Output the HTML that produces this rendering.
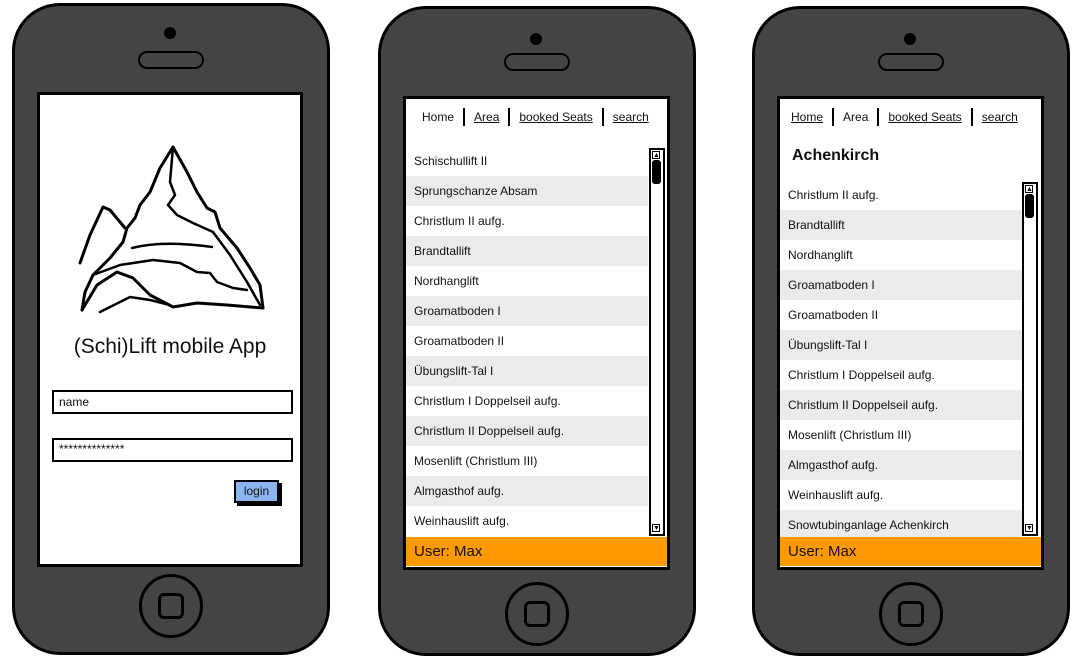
<!DOCTYPE html>
<html><head><meta charset="utf-8"><style>
*{margin:0;padding:0;box-sizing:border-box}
body{width:1079px;height:661px;background:#fff;position:relative;overflow:hidden;font-family:"Liberation Sans",sans-serif;color:#111}
.a{position:absolute}
.phone{position:absolute;background:#444;border:3px solid #000;border-radius:48px}
.scr{position:absolute;background:#fff;border:3px solid #000}
.cam{position:absolute;width:12px;height:12px;border-radius:50%;background:#000}
.spk{position:absolute;width:66px;height:18px;border:2.5px solid #000;border-radius:9px}
.home{position:absolute;width:64px;height:64px;border:3px solid #000;border-radius:50%}
.home i{position:absolute;left:16px;top:16px;width:26px;height:26px;border:3px solid #000;border-radius:6px}
.row{position:absolute;height:30px;line-height:30px;font-size:12px;padding-left:8px}
.g{background:#ebebeb}
.nav{position:absolute;font-size:12px;white-space:nowrap}
.nav span{display:inline-block;padding:0 9px;border-right:2px solid #000;line-height:18px}
.nav span:first-child{padding-left:0}
.nav span:last-child{border-right:none}
.u{text-decoration:underline}
.bar{position:absolute;background:#ff9900;font-size:15px;line-height:29px;padding-left:8px}
.sb{position:absolute;width:16px;border:2px solid #000;background:#fff}
.btn{position:absolute;width:8px;height:8px;border:1px solid #000;font-size:7px;line-height:7px;text-align:center}
</style></head><body>

<!-- Phone 1 -->
<div class="phone" style="left:12px;top:3px;width:318px;height:652px"></div>
<div class="cam" style="left:164px;top:27px"></div>
<div class="spk" style="left:138px;top:51px"></div>
<div class="scr" style="left:37px;top:92px;width:266px;height:475px"></div>
<div class="home" style="left:139px;top:574px"><i></i></div>
<svg class="a" style="left:0;top:0" width="330" height="330" fill="none" stroke="#000" stroke-width="3" stroke-linejoin="round" stroke-linecap="round">
<path d="M173,147 L160,168 150,192 140,205 135,218 127,228 123,242 110,258 93,275 85,292 82,310"/>
<path d="M80,263 L90,235 103,207 110,210 125,228"/>
<path d="M173,147 L187,172 197,192 207,208 215,212 220,228 237,248 250,268 260,285 263,308"/>
<path d="M173,147 L170,182 175,195 168,205 177,215 193,223 213,232 230,255 247,282 260,305" stroke-width="2.5"/>
<path d="M132,248 Q163,240 212,247" stroke-width="2.5"/>
<path d="M93,275 L120,265 153,260 180,263 197,272 210,273 217,282 233,288 247,290" stroke-width="2.5"/>
<path d="M82,310 L97,285 117,272 133,278 150,295 173,307 197,303 227,305 263,308"/>
<path d="M100,312 L130,297 150,300 170,305" stroke-width="2.5"/>
</svg>
<div class="a" style="left:40px;top:335px;width:260px;text-align:center;font-size:21px">(Schi)Lift mobile App</div>
<div class="a" style="left:52px;top:390px;width:241px;height:24px;border:2px solid #000;font-size:12px;line-height:20px;padding-left:5px">name</div>
<div class="a" style="left:52px;top:438px;width:241px;height:24px;border:2px solid #000;font-size:12px;line-height:18px;padding-left:5px">**************</div>
<div class="a" style="left:237px;top:483px;width:45px;height:23px;background:#000"></div>
<div class="a" style="left:234px;top:480px;width:45px;height:23px;background:#8cb4f0;border:2px solid #000;font-size:12px;line-height:19px;text-align:center">login</div>

<!-- Phone 2 -->
<div class="phone" style="left:378px;top:6px;width:318px;height:650px"></div>
<div class="cam" style="left:530px;top:33px"></div>
<div class="spk" style="left:504px;top:53px"></div>
<div class="scr" style="left:403px;top:96px;width:267px;height:474px"></div>
<div class="home" style="left:505px;top:582px"><i></i></div>
<div class="nav" style="left:422px;top:108px"><span>Home</span><span class="u">Area</span><span class="u">booked Seats</span><span class="u">search</span></div>
<div class="row" style="left:406px;top:146px;width:242px">Schischullift II</div>
<div class="row g" style="left:406px;top:176px;width:242px">Sprungschanze Absam</div>
<div class="row" style="left:406px;top:206px;width:242px">Christlum II aufg.</div>
<div class="row g" style="left:406px;top:236px;width:242px">Brandtallift</div>
<div class="row" style="left:406px;top:266px;width:242px">Nordhanglift</div>
<div class="row g" style="left:406px;top:296px;width:242px">Groamatboden I</div>
<div class="row" style="left:406px;top:326px;width:242px">Groamatboden II</div>
<div class="row g" style="left:406px;top:356px;width:242px">Übungslift-Tal I</div>
<div class="row" style="left:406px;top:386px;width:242px">Christlum I Doppelseil aufg.</div>
<div class="row g" style="left:406px;top:416px;width:242px">Christlum II Doppelseil aufg.</div>
<div class="row" style="left:406px;top:446px;width:242px">Mosenlift (Christlum III)</div>
<div class="row g" style="left:406px;top:476px;width:242px">Almgasthof aufg.</div>
<div class="row" style="left:406px;top:506px;width:242px">Weinhauslift aufg.</div>
<div class="sb" style="left:649px;top:148px;height:388px"></div>
<div class="btn" style="left:652px;top:151px">▲</div>
<div class="a" style="left:652px;top:160px;width:9px;height:24px;background:#000;border-radius:3px"></div>
<div class="btn" style="left:652px;top:524px">▼</div>
<div class="bar" style="left:406px;top:537px;width:261px;height:29px">User: Max</div>

<!-- Phone 3 -->
<div class="phone" style="left:752px;top:6px;width:318px;height:650px"></div>
<div class="cam" style="left:904px;top:33px"></div>
<div class="spk" style="left:878px;top:53px"></div>
<div class="scr" style="left:777px;top:96px;width:267px;height:474px"></div>
<div class="home" style="left:879px;top:582px"><i></i></div>
<div class="nav" style="left:791px;top:108px"><span class="u">Home</span><span>Area</span><span class="u">booked Seats</span><span class="u">search</span></div>
<div class="a" style="left:792px;top:147px;font-size:16px;font-weight:bold">Achenkirch</div>
<div class="row" style="left:780px;top:180px;width:242px">Christlum II aufg.</div>
<div class="row g" style="left:780px;top:210px;width:242px">Brandtallift</div>
<div class="row" style="left:780px;top:240px;width:242px">Nordhanglift</div>
<div class="row g" style="left:780px;top:270px;width:242px">Groamatboden I</div>
<div class="row" style="left:780px;top:300px;width:242px">Groamatboden II</div>
<div class="row g" style="left:780px;top:330px;width:242px">Übungslift-Tal I</div>
<div class="row" style="left:780px;top:360px;width:242px">Christlum I Doppelseil aufg.</div>
<div class="row g" style="left:780px;top:390px;width:242px">Christlum II Doppelseil aufg.</div>
<div class="row" style="left:780px;top:420px;width:242px">Mosenlift (Christlum III)</div>
<div class="row g" style="left:780px;top:450px;width:242px">Almgasthof aufg.</div>
<div class="row" style="left:780px;top:480px;width:242px">Weinhauslift aufg.</div>
<div class="row g" style="left:780px;top:510px;width:242px;height:27px">Snowtubinganlage Achenkirch</div>
<div class="sb" style="left:1022px;top:182px;height:354px"></div>
<div class="btn" style="left:1025px;top:185px">▲</div>
<div class="a" style="left:1025px;top:194px;width:9px;height:24px;background:#000;border-radius:3px"></div>
<div class="btn" style="left:1025px;top:524px">▼</div>
<div class="bar" style="left:780px;top:537px;width:261px;height:29px">User: Max</div>

</body></html>
